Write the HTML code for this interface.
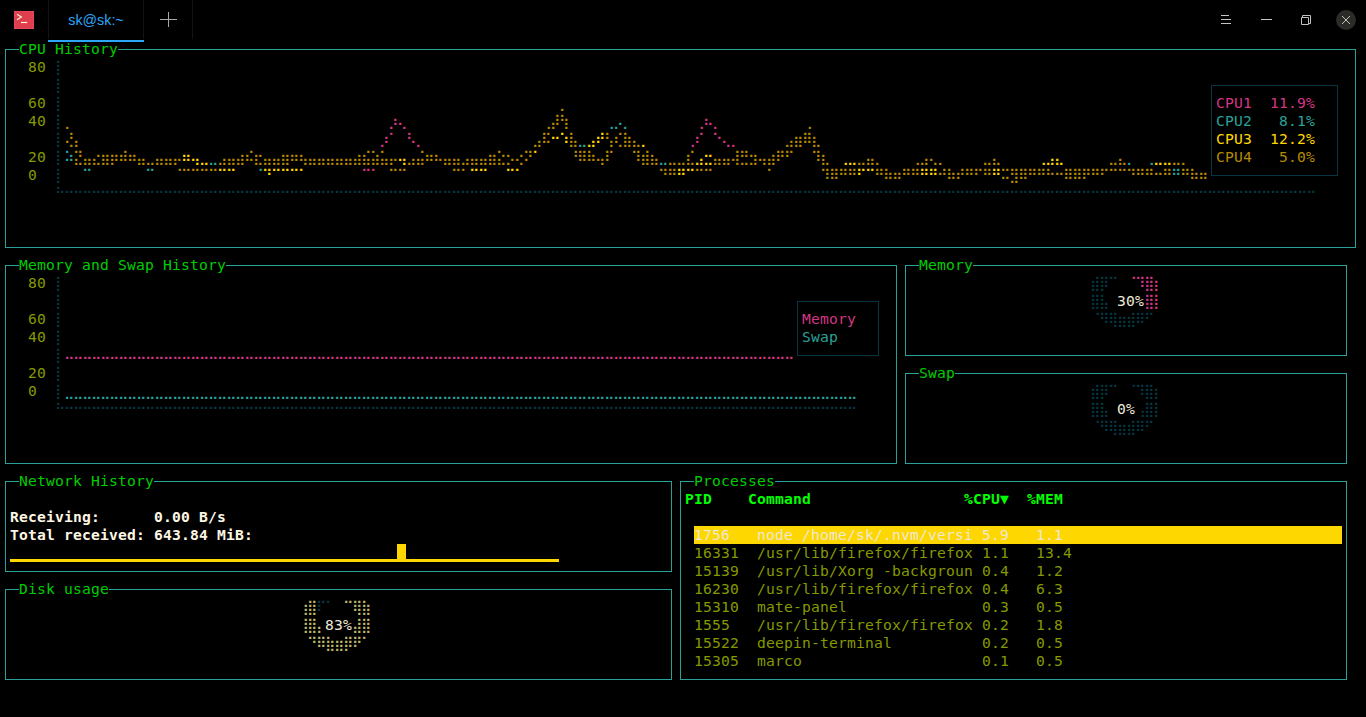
<!DOCTYPE html>
<html lang="en"><head><meta charset="utf-8"><title>sk@sk:~</title>
<style>
html,body{margin:0;padding:0;background:#000;}
body{width:1366px;height:717px;position:relative;overflow:hidden;font-family:"DejaVu Sans Mono","Liberation Mono",monospace;}
.t,.br{position:absolute;white-space:pre;height:18px;line-height:18px;font-size:14.67px;}
.t{font-family:"DejaVu Sans Mono","Liberation Mono",monospace;letter-spacing:0.176172px;}
.b{font-weight:bold;}
.br{font-family:"DejaVu Sans","DejaVu Sans Mono",sans-serif;letter-spacing:-1.734766px;}
.ti{color:#00cd00;background:#000;overflow:hidden;}
.bx{position:absolute;border:1px solid;}
.hl{position:absolute;background:#ffd700;}
.cO{color:#b58900}
.cY{color:#ffd700}
.cM{color:#d33682}
.cC{color:#2aa198}
.cD{color:#073642}
.cP{color:#bdb76b}
.cG{color:#00cd00}
.cg{color:#00ff00}
.cL{color:#859900}
.cW{color:#fdf6e3}
.cw{color:#eee8d5}
.cS{color:#eee8d5}
/* title bar */
#icon{position:absolute;left:14px;top:11px;width:20px;height:18px;background:#de3f4f;box-sizing:border-box;border:1px solid #e8475a;}
#tab{position:absolute;left:48px;top:0;width:96px;height:40px;color:#2ca7f8;font:14.3px "Liberation Sans",sans-serif;line-height:40px;text-align:center;}
#ul{z-index:5;position:absolute;left:48px;top:40px;width:96px;height:2px;background:#2ca7f8;}
.sep{position:absolute;top:0;width:1px;height:39px;background:#131313;}
svg{position:absolute;left:0;top:0;}
</style></head><body>
<div id="icon"></div>
<div id="tab">sk@sk:~</div><div id="ul"></div>
<div class="sep" style="left:48px"></div><div class="sep" style="left:143px"></div><div class="sep" style="left:192px"></div>
<svg width="1366" height="40" viewBox="0 0 1366 40" fill="none" shape-rendering="geometricPrecision">
<path d="M17 14.3 L21.4 17 L17 19.7" stroke="#fff5d6" stroke-width="1.15"/>
<path d="M21 22.5 H27.2" stroke="#fff5d6" stroke-width="1.2"/>
<path d="M160 19.5 H177 M168.5 12 V27" stroke="#a8a8a8" stroke-width="1"/>
<path d="M1221 15.5 H1229 M1221 19.5 H1231 M1221 23.5 H1231" stroke="#c4c4c4" stroke-width="1"/>
<path d="M1261 19.5 H1272" stroke="#c4c4c4" stroke-width="1"/>
<path d="M1301.5 17.5 H1308.5 V24.5 H1301.5 Z M1302.5 17 V15.5 H1310.5 V23.5 H1309" stroke="#c4c4c4" stroke-width="1"/>
<circle cx="1346" cy="20" r="10" fill="#2b2b27"/>
<path d="M1342 16 L1350 24 M1350 16 L1342 24" stroke="#c4c0b4" stroke-width="1"/>
</svg>
<div class="bx" style="left:5px;top:49px;width:1349px;height:197px;border-color:#2aa198"></div>
<div class="bx" style="left:5px;top:265px;width:890px;height:197px;border-color:#2aa198"></div>
<div class="bx" style="left:905px;top:265px;width:440px;height:89px;border-color:#2aa198"></div>
<div class="bx" style="left:905px;top:373px;width:440px;height:89px;border-color:#2aa198"></div>
<div class="bx" style="left:5px;top:481px;width:665px;height:89px;border-color:#2aa198"></div>
<div class="bx" style="left:5px;top:589px;width:665px;height:89px;border-color:#2aa198"></div>
<div class="bx" style="left:680px;top:481px;width:665px;height:197px;border-color:#2aa198"></div>
<div class="bx" style="left:1211px;top:85px;width:125px;height:89px;border-color:#073642"></div>
<div class="bx" style="left:797px;top:301px;width:80px;height:53px;border-color:#073642"></div>
<div class="t ti" style="left:19px;top:40px;width:99px">CPU History</div>
<div class="t ti" style="left:19px;top:256px;width:207px">Memory and Swap History</div>
<div class="t ti" style="left:919px;top:256px;width:54px">Memory</div>
<div class="t ti" style="left:919px;top:364px;width:36px">Swap</div>
<div class="t ti" style="left:19px;top:472px;width:135px">Network History</div>
<div class="t ti" style="left:19px;top:580px;width:90px">Disk usage</div>
<div class="t ti" style="left:694px;top:472px;width:81px">Processes</div>
<div class="hl" style="left:694px;top:526px;width:648px;height:18px"></div>
<div class="hl" style="left:10px;top:559px;width:549px;height:3px"></div>
<div class="hl" style="left:397px;top:544px;width:9px;height:18px"></div>
<span class="t cL" style="left:28px;top:58px">80</span>
<span class="br cD" style="left:55px;top:58px">⡇</span>
<span class="br cD" style="left:55px;top:76px">⡇</span>
<span class="t cL" style="left:28px;top:94px">60</span>
<span class="br cD" style="left:55px;top:94px">⡇</span>
<span class="br cO" style="left:559px;top:94px">⡀</span>
<span class="t cM" style="left:1216px;top:94px">CPU1  11.9%</span>
<span class="t cL" style="left:28px;top:112px">40</span>
<span class="br cD" style="left:55px;top:112px">⡇</span>
<span class="br cO" style="left:64px;top:112px">⡀</span>
<span class="br cM" style="left:388px;top:112px">⡰⢄</span>
<span class="br cO" style="left:541px;top:112px">⢀⡼⢳</span>
<span class="br cC" style="left:604px;top:112px">⢀⡠⡀</span>
<span class="br cM" style="left:694px;top:112px">⢀⠦⡀</span>
<span class="br cO" style="left:802px;top:112px">⢀</span>
<span class="t cC" style="left:1216px;top:112px">CPU2   8.1%</span>
<span class="br cD" style="left:55px;top:130px">⡇</span>
<span class="br cO" style="left:64px;top:130px">⢜⡄</span>
<span class="br cM" style="left:379px;top:130px">⡰⠁⠀⠣⡀</span>
<span class="br cO" style="left:532px;top:130px">⣠⠯</span>
<span class="br cY" style="left:550px;top:130px">⠒⠱</span>
<span class="br cO" style="left:568px;top:130px">⣧</span>
<span class="br cC" style="left:577px;top:130px">⣀</span>
<span class="br cY" style="left:586px;top:130px">⣠⠞</span>
<span class="br cO" style="left:604px;top:130px">⢣⢎⣷⣄</span>
<span class="br cY" style="left:640px;top:130px">⡀</span>
<span class="br cM" style="left:685px;top:130px">⢀⠎⠀⠑⢄⡀</span>
<span class="br cO" style="left:784px;top:130px">⣠⣶⠿⣆</span>
<span class="t cY" style="left:1216px;top:130px">CPU3  12.2%</span>
<span class="t cL" style="left:28px;top:148px">20</span>
<span class="br cD" style="left:55px;top:148px">⡇</span>
<span class="br cC" style="left:64px;top:148px">⠵</span>
<span class="br cO" style="left:73px;top:148px">⣝⣤⣔⣶⡶⠾⠶⣤⣀⣤⣤⡤</span>
<span class="br cY" style="left:181px;top:148px">⠶⢤⣀</span>
<span class="br cC" style="left:208px;top:148px">⣀</span>
<span class="br cO" style="left:217px;top:148px">⣠⣤⣴⠮⣖⣤⣤⣶⠶⢦⣤⣤⣤⣤⣤⣴⣮⣵⣥⡤</span>
<span class="br cY" style="left:397px;top:148px">⢤</span>
<span class="br cO" style="left:406px;top:148px">⣠⣬⠶⠦⣤⣤⣠⣤⣤⣶⣕⡢⢔⠝</span>
<span class="br cY" style="left:532px;top:148px">⠁</span>
<span class="br cO" style="left:568px;top:148px">⠘⠿⠷⢤⠏⠀⠀⠹⣾⣦</span>
<span class="br cC" style="left:658px;top:148px">⣀</span>
<span class="br cO" style="left:667px;top:148px">⣀⣀⣎</span>
<span class="br cY" style="left:694px;top:148px">⣠⣒</span>
<span class="br cO" style="left:712px;top:148px">⣤⣤⢼⣛⣲⢤⣴⠟⠋⠀⠀⠹⣆</span>
<span class="br cY" style="left:838px;top:148px">⢀⣀</span>
<span class="br cO" style="left:856px;top:148px">⣀⣤⡀⠀⠀⠀⢀⣠⢄⡀</span>
<span class="br cO" style="left:982px;top:148px">⣀⣄</span>
<span class="br cY" style="left:1036px;top:148px">⢀⣠⣄</span>
<span class="br cO" style="left:1108px;top:148px">⣀⣄</span>
<span class="br cC" style="left:1126px;top:148px">⡀⠀⢀</span>
<span class="br cY" style="left:1153px;top:148px">⣀⣀</span>
<span class="br cO" style="left:1171px;top:148px">⣀⡀</span>
<span class="t cO" style="left:1216px;top:148px">CPU4   5.0%</span>
<span class="t cL" style="left:28px;top:166px">0</span>
<span class="br cD" style="left:55px;top:166px">⡇</span>
<span class="br cC" style="left:82px;top:166px">⠉</span>
<span class="br cC" style="left:145px;top:166px">⠉</span>
<span class="br cO" style="left:172px;top:166px">⠈⠉⠉⠉⠉</span>
<span class="br cY" style="left:217px;top:166px">⠉⠉</span>
<span class="br cC" style="left:253px;top:166px">⠈</span>
<span class="br cY" style="left:262px;top:166px">⠙⠉⠉⠉⠁</span>
<span class="br cM" style="left:361px;top:166px">⠉⠁</span>
<span class="br cO" style="left:388px;top:166px">⠉⠉</span>
<span class="br cO" style="left:451px;top:166px">⠉⠁</span>
<span class="br cY" style="left:469px;top:166px">⠉⠉⠀⠀⠉⠁</span>
<span class="br cO" style="left:658px;top:166px">⠙⠛</span>
<span class="br cY" style="left:676px;top:166px">⠛⠉</span>
<span class="br cO" style="left:694px;top:166px">⠉⠉</span>
<span class="br cO" style="left:766px;top:166px">⠁</span>
<span class="br cO" style="left:820px;top:166px">⠹⠿⠛⠛</span>
<span class="br cY" style="left:856px;top:166px">⠋⠉</span>
<span class="br cO" style="left:874px;top:166px">⠛⠷⠶⠛⠛</span>
<span class="br cY" style="left:919px;top:166px">⠛⠛</span>
<span class="br cO" style="left:937px;top:166px">⠚⠷⠞⠛⠋⠛</span>
<span class="br cY" style="left:991px;top:166px">⠛</span>
<span class="br cO" style="left:1000px;top:166px">⠭⣻⠿⠛⠛⠓⠒⠿⠿⠟⠛⠋⠉⠉⠙⠛⠛⠒⠛</span>
<span class="br cC" style="left:1171px;top:166px">⠛</span>
<span class="br cO" style="left:1180px;top:166px">⠛⠷⠶</span>
<span class="br cD" style="left:55px;top:184px">⠓⠒⠒⠒⠒⠒⠒⠒⠒⠒⠒⠒⠒⠒⠒⠒⠒⠒⠒⠒⠒⠒⠒⠒⠒⠒⠒⠒⠒⠒⠒⠒</span>
<span class="br cD" style="left:343px;top:184px">⠒⠒⠒⠒⠒⠒⠒⠒⠒⠒⠒⠒⠒⠒⠒⠒⠒⠒⠒⠒⠒⠒⠒⠒⠒⠒⠒⠒⠒⠒⠒⠒</span>
<span class="br cD" style="left:631px;top:184px">⠒⠒⠒⠒⠒⠒⠒⠒⠒⠒⠒⠒⠒⠒⠒⠒⠒⠒⠒⠒⠒⠒⠒⠒⠒⠒⠒⠒⠒⠒⠒⠒</span>
<span class="br cD" style="left:919px;top:184px">⠒⠒⠒⠒⠒⠒⠒⠒⠒⠒⠒⠒⠒⠒⠒⠒⠒⠒⠒⠒⠒⠒⠒⠒⠒⠒⠒⠒⠒⠒⠒⠒</span>
<span class="br cD" style="left:1207px;top:184px">⠒⠒⠒⠒⠒⠒⠒⠒⠒⠒⠒⠒</span>
<span class="t cL" style="left:28px;top:274px">80</span>
<span class="br cD" style="left:55px;top:274px">⡇</span>
<span class="br cD" style="left:1090px;top:274px">⣾⡿⠉</span>
<span class="br cM" style="left:1126px;top:274px">⠈⠹⣿⡆</span>
<span class="br cD" style="left:55px;top:292px">⡇</span>
<span class="br cD" style="left:1090px;top:292px">⣿⣧</span>
<span class="t cw" style="left:1117px;top:292px">30%</span>
<span class="br cM" style="left:1144px;top:292px">⣿⡇</span>
<span class="t cL" style="left:28px;top:310px">60</span>
<span class="br cD" style="left:55px;top:310px">⡇</span>
<span class="t cM" style="left:802px;top:310px">Memory</span>
<span class="br cD" style="left:1090px;top:310px">⠈⠻⢿⣶⣾⠿⠋</span>
<span class="t cL" style="left:28px;top:328px">40</span>
<span class="br cD" style="left:55px;top:328px">⡇</span>
<span class="t cC" style="left:802px;top:328px">Swap</span>
<span class="br cD" style="left:55px;top:346px">⡇</span>
<span class="br cM" style="left:64px;top:346px">⠤⠤⠤⠤⠤⠤⠤⠤⠤⠤⠤⠤⠤⠤⠤⠤⠤⠤⠤⠤⠤⠤⠤⠤⠤⠤⠤⠤⠤⠤⠤⠤</span>
<span class="br cM" style="left:352px;top:346px">⠤⠤⠤⠤⠤⠤⠤⠤⠤⠤⠤⠤⠤⠤⠤⠤⠤⠤⠤⠤⠤⠤⠤⠤⠤⠤⠤⠤⠤⠤⠤⠤</span>
<span class="br cM" style="left:640px;top:346px">⠤⠤⠤⠤⠤⠤⠤⠤⠤⠤⠤⠤⠤⠤⠤⠤⠤</span>
<span class="t cL" style="left:28px;top:364px">20</span>
<span class="br cD" style="left:55px;top:364px">⡇</span>
<span class="t cL" style="left:28px;top:382px">0</span>
<span class="br cD" style="left:55px;top:382px">⡇</span>
<span class="br cC" style="left:64px;top:382px">⣀⣀⣀⣀⣀⣀⣀⣀⣀⣀⣀⣀⣀⣀⣀⣀⣀⣀⣀⣀⣀⣀⣀⣀⣀⣀⣀⣀⣀⣀⣀⣀</span>
<span class="br cC" style="left:352px;top:382px">⣀⣀⣀⣀⣀⣀⣀⣀⣀⣀⣀⣀⣀⣀⣀⣀⣀⣀⣀⣀⣀⣀⣀⣀⣀⣀⣀⣀⣀⣀⣀⣀</span>
<span class="br cC" style="left:640px;top:382px">⣀⣀⣀⣀⣀⣀⣀⣀⣀⣀⣀⣀⣀⣀⣀⣀⣀⣀⣀⣀⣀⣀⣀⣀</span>
<span class="br cD" style="left:1090px;top:382px">⣾⡿⠉⠀⠈⠹⣿⡆</span>
<span class="br cD" style="left:55px;top:400px">⠓⠒⠒⠒⠒⠒⠒⠒⠒⠒⠒⠒⠒⠒⠒⠒⠒⠒⠒⠒⠒⠒⠒⠒⠒⠒⠒⠒⠒⠒⠒⠒</span>
<span class="br cD" style="left:343px;top:400px">⠒⠒⠒⠒⠒⠒⠒⠒⠒⠒⠒⠒⠒⠒⠒⠒⠒⠒⠒⠒⠒⠒⠒⠒⠒⠒⠒⠒⠒⠒⠒⠒</span>
<span class="br cD" style="left:631px;top:400px">⠒⠒⠒⠒⠒⠒⠒⠒⠒⠒⠒⠒⠒⠒⠒⠒⠒⠒⠒⠒⠒⠒⠒⠒⠒</span>
<span class="br cD" style="left:1090px;top:400px">⣿⣧</span>
<span class="t cw" style="left:1117px;top:400px">0%</span>
<span class="br cD" style="left:1135px;top:400px">⢠⣿⡇</span>
<span class="br cD" style="left:1090px;top:418px">⠈⠻⢿⣶⣾⠿⠋</span>
<span class="t b cg" style="left:685px;top:490px">PID</span>
<span class="t b cg" style="left:748px;top:490px">Command</span>
<span class="t b cg" style="left:964px;top:490px">%CPU▼  %MEM</span>
<span class="t b cW" style="left:10px;top:508px">Receiving:</span>
<span class="t b cW" style="left:154px;top:508px">0.00 B/s</span>
<span class="t b cW" style="left:10px;top:526px">Total received: 643.84 MiB:</span>
<span class="t cS" style="left:694px;top:526px">1756   node /home/sk/.nvm/versi 5</span>
<span class="t cS" style="left:991px;top:526px">.9   1.1</span>
<span class="t cL" style="left:694px;top:544px">16331  /usr/lib/firefox/firefox 1</span>
<span class="t cL" style="left:991px;top:544px">.1   13.4</span>
<span class="t cL" style="left:694px;top:562px">15139  /usr/lib/Xorg -backgroun 0</span>
<span class="t cL" style="left:991px;top:562px">.4   1.2</span>
<span class="t cL" style="left:694px;top:580px">16230  /usr/lib/firefox/firefox 0</span>
<span class="t cL" style="left:991px;top:580px">.4   6.3</span>
<span class="br cP" style="left:298px;top:598px">⢰⣿</span>
<span class="br cD" style="left:316px;top:598px">⠏⠁</span>
<span class="br cP" style="left:343px;top:598px">⠉⢿⣷</span>
<span class="t cL" style="left:694px;top:598px">15310  mate-panel</span>
<span class="t cL" style="left:982px;top:598px">0.3   0.5</span>
<span class="br cP" style="left:298px;top:616px">⢸⣿⡄</span>
<span class="t cw" style="left:325px;top:616px">83%</span>
<span class="br cP" style="left:352px;top:616px">⣼⣿</span>
<span class="t cL" style="left:694px;top:616px">1555   /usr/lib/firefox/firefox 0</span>
<span class="t cL" style="left:991px;top:616px">.2   1.8</span>
<span class="br cP" style="left:307px;top:634px">⠙⠿⣷⣶⡿⠟⠁</span>
<span class="t cL" style="left:694px;top:634px">15522  deepin-terminal</span>
<span class="t cL" style="left:982px;top:634px">0.2   0.5</span>
<span class="t cL" style="left:694px;top:652px">15305  marco</span>
<span class="t cL" style="left:982px;top:652px">0.1   0.5</span>
</body></html>
